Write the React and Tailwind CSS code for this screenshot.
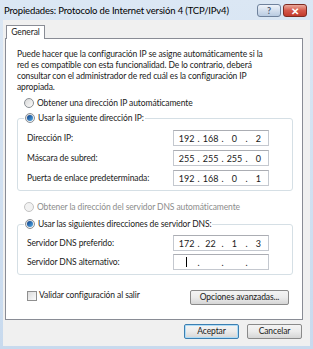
import React from 'react';

// Windows 7 style "Propiedades: Protocolo de Internet versión 4" dialog

function Radio({ checked, disabled }) {
  return (
    <span
      className={`relative inline-flex h-[10px] w-[10px] shrink-0 items-center justify-center rounded-full border ${
        disabled ? 'border-[#c3c3c3] bg-[#f2f2f2]' : 'border-[#8a8f94] bg-gradient-to-br from-[#d8d8d8] to-[#fbfbfb]'
      }`}
    >
      {checked && (
        <span className="h-[6px] w-[6px] rounded-full bg-gradient-to-br from-[#0a3a86] to-[#5ab0e8]" />
      )}
    </span>
  );
}

function IpBox({ parts, cursor }) {
  return (
    <div className="flex h-[16px] w-[96px] items-center border border-[#c4c8cf] border-t-[#abadb3] bg-white pl-[3px] text-[9px] leading-none tracking-normal text-[#1a1a1a]">
      {[0, 1, 2, 3].map((i) => (
        <React.Fragment key={i}>
          <span className="flex w-[20px] justify-center">
            {cursor && i === 0 ? <span className="h-[10px] w-px bg-black" /> : parts[i]}
          </span>
          {i < 3 && <span className="flex w-[5px] justify-center">.</span>}
        </React.Fragment>
      ))}
    </div>
  );
}

function Row({ label, parts, cursor }) {
  return (
    <div className="flex items-center">
      <span className="w-[146px]">{label}</span>
      <IpBox parts={parts} cursor={cursor} />
    </div>
  );
}

function Button({ children, primary, className = '' }) {
  return (
    <button
      className={`flex h-[15px] items-center justify-center rounded-[2px] border bg-gradient-to-b from-[#f4f4f4] via-[#ebebeb] to-[#d6d6d6] leading-none text-[#1a1a1a] ${
        primary ? 'border-[#3c7fb1] shadow-[inset_0_0_0_1px_#aedcf7]' : 'border-[#8a8a8a]'
      } ${className}`}
    >
      {children}
    </button>
  );
}

export default function App() {
  return (
    <div className="flex h-[349px] w-[313px] flex-col bg-gradient-to-b from-[#dbe7f4] to-[#c8daee] font-['Lato','Noto_Sans',sans-serif] text-[8.5px] leading-[11px] tracking-[-0.1px] text-[#1a1a1a]">
      {/* title bar */}
      <div className="flex h-[20px] items-center pl-[4px] pr-[6px]">
        <span className="flex-1 whitespace-nowrap text-[9.5px] tracking-[-0.15px] text-black">
          Propiedades: Protocolo de Internet versión 4 (TCP/IPv4)
        </span>
        <div className="flex gap-[2px] self-start pt-[4px]">
          <span className="flex h-[13px] w-[24px] items-center justify-center rounded-[3px] border border-[#6f829c] bg-gradient-to-b from-[#eef3fa] to-[#b9cbe1] text-[9px] font-bold leading-none text-[#4a5a72]">
            ?
          </span>
          <span className="flex h-[13px] w-[24px] items-center justify-center rounded-[3px] border border-[#7d2b22] bg-gradient-to-b from-[#e9a99d] via-[#d4574a] to-[#c23a2c] text-[10px] font-bold leading-none text-white">
            ✕
          </span>
        </div>
      </div>

      {/* client area */}
      <div className="mx-[3px] mb-[3px] flex flex-1 flex-col bg-[#f0f0f0] pl-[2px]">
        <div className="flex pl-[1px] pt-[5px]">
          <span className="relative z-10 -mb-px flex h-[14px] w-[39px] items-center justify-center border border-b-0 border-[#898c95] bg-white">
            General
          </span>
        </div>

        <div className="flex h-[282px] w-[298px] flex-col border border-[#898c95] bg-white pl-[11px] pr-[10px]">
          <p className="mt-[10px] whitespace-nowrap">
            Puede hacer que la configuración IP se asigne automáticamente si la
            <br />
            red es compatible con esta funcionalidad. De lo contrario, deberá
            <br />
            consultar con el administrador de red cuál es la configuración IP
            <br />
            apropiada.
          </p>

          <div className="mt-[4px] flex h-[12px] items-center gap-[3px] pl-[7px]">
            <Radio />
            <span>Obtener una dirección IP automáticamente</span>
          </div>

          <fieldset className="mt-[3px] flex w-[276px] flex-col gap-[4px] rounded-[3px] border border-[#d5dfe5] pb-[4px] pl-[9px] pt-[6px]">
            <legend className="-ml-[3px] flex h-[12px] items-center gap-[3px] bg-white px-[1px]">
              <Radio checked />
              <span>Usar la siguiente dirección IP:</span>
            </legend>
            <Row label="Dirección IP:" parts={['192', '168', '0', '2']} />
            <Row label="Máscara de subred:" parts={['255', '255', '255', '0']} />
            <Row label="Puerta de enlace predeterminada:" parts={['192', '168', '0', '1']} />
          </fieldset>

          <div className="mt-[10px] flex h-[12px] items-center gap-[3px] pl-[7px] text-[#8d8d8d]">
            <Radio disabled />
            <span>Obtener la dirección del servidor DNS automáticamente</span>
          </div>

          <fieldset className="mt-[5px] flex w-[276px] flex-col gap-[3px] rounded-[3px] border border-[#d5dfe5] pb-[4px] pl-[9px] pt-[5px]">
            <legend className="-ml-[3px] flex h-[12px] items-center gap-[3px] bg-white px-[1px]">
              <Radio checked />
              <span>Usar las siguientes direcciones de servidor DNS:</span>
            </legend>
            <Row label="Servidor DNS preferido:" parts={['172', '22', '1', '3']} />
            <Row label="Servidor DNS alternativo:" parts={['', '', '', '']} cursor />
          </fieldset>

          <div className="mt-[15px] flex items-start">
            <div className="flex h-[11px] items-center gap-[2px] pl-[10px]">
              <span className="h-[10px] w-[10px] border border-[#8f8f8f] bg-gradient-to-br from-[#dcdcdc] to-[#fbfbfb]" />
              <span>Validar configuración al salir</span>
            </div>
            <Button className="ml-auto mr-[3px] w-[99px]">Opciones avanzadas...</Button>
          </div>
        </div>

        <div className="flex justify-end gap-[8px] pr-[8px] pt-[4px]">
          <Button primary className="w-[55px]">Aceptar</Button>
          <Button className="w-[55px]">Cancelar</Button>
        </div>
      </div>
    </div>
  );
}
